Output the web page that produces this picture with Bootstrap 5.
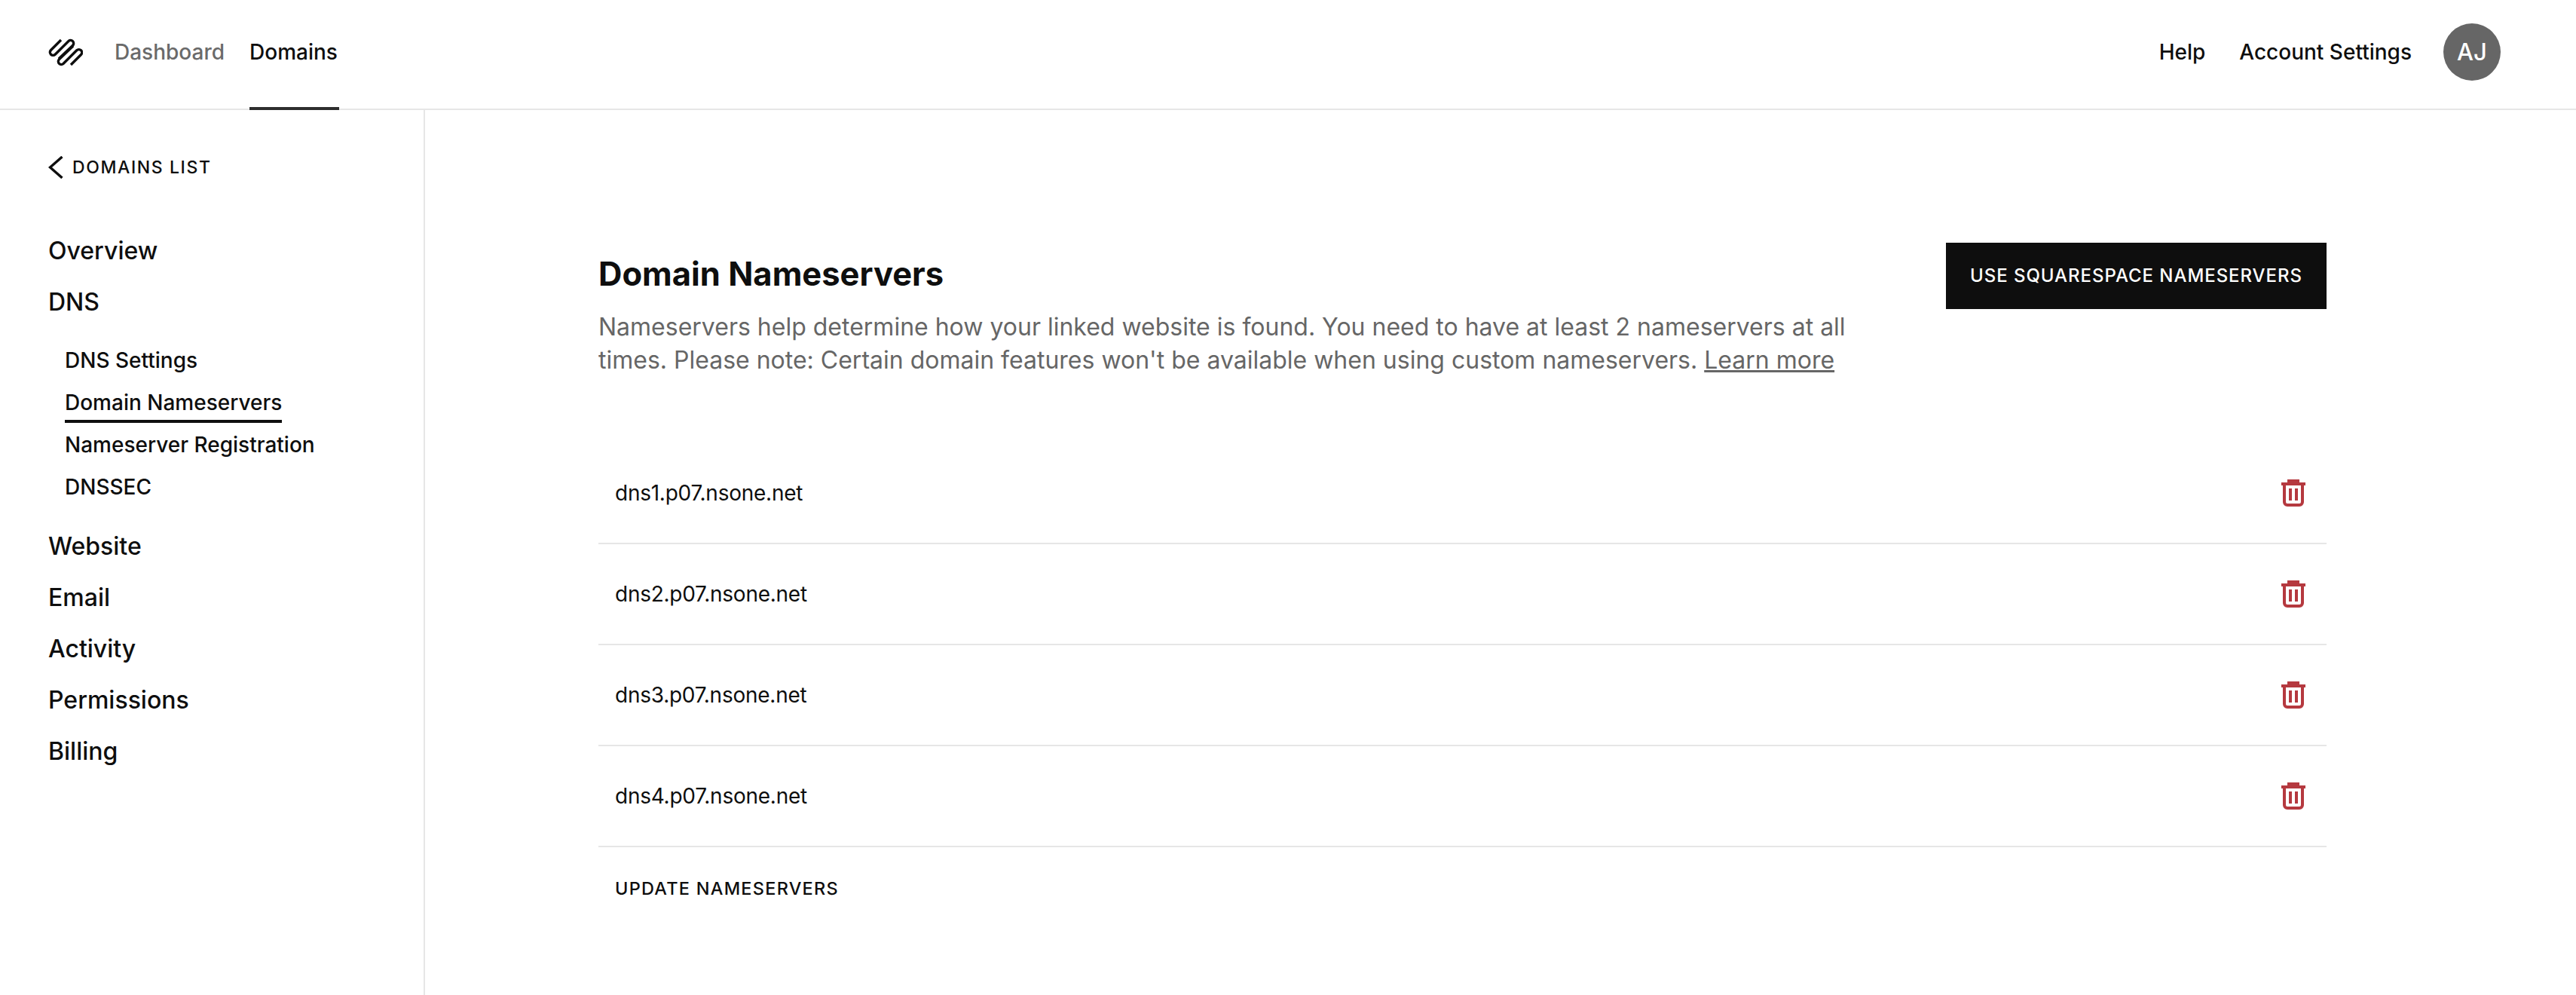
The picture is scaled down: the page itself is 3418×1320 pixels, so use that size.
<!DOCTYPE html>
<html lang="en">
<head>
<meta charset="utf-8">
<title>Domain Nameservers</title>
<link rel="stylesheet" href="https://cdn.jsdelivr.net/npm/bootstrap@5.3.0/dist/css/bootstrap.min.css">
<style>
body{font-family:Inter,"Liberation Sans",sans-serif;color:#0e0e0e;background:#fff;height:1320px;overflow:hidden}
.top-bar{height:146px;border-bottom:2px solid #e6e6e6;padding:0 100px 6px 64px}
.top-link{font-size:28px;font-weight:500;color:#0e0e0e;text-decoration:none}
.top-link.muted{color:#6a6a6a;margin-right:33px}
.tab-cur{height:146px;border-bottom:4px solid #2e2e2e;margin-bottom:-8px;padding-bottom:4px;align-self:flex-start;padding-right:2px}
.logo-mark{width:46px;height:37px;margin-right:42px}
.right-gap-a{margin-left:45px}
.right-gap-b{margin-left:42px}
.avatar-dot{width:76px;height:76px;background:#666;color:#fff;font-size:31px;font-weight:500}
.side-pane{width:564px;height:1174px;border-right:2px solid #e6e6e6;padding:59px 0 0 64px}
.back-link{font-size:23px;font-weight:500;letter-spacing:1.6px;color:#0e0e0e;text-decoration:none;margin-bottom:59px;gap:12px}
.nav-main{font-size:32px;font-weight:500;color:#0e0e0e;text-decoration:none;height:68px;line-height:68px;display:block}
.nav-sub-wrap{padding:15px 0 17px 22px}
.nav-sub{font-size:28px;font-weight:500;color:#0e0e0e;text-decoration:none;height:56px;line-height:56px;display:block}
.nav-sub span{display:inline-block;line-height:1.3}
.nav-sub.cur span{border-bottom:4px solid #0e0e0e;padding-bottom:5px;margin-bottom:-9px}
.main-pane{padding:176px 331px 0 230px}
.page-title{font-size:43.5px;font-weight:700;line-height:60px;margin:11px 0 19px}
.page-desc{font-size:32px;line-height:44px;color:#666;margin:0;width:1660px}
.page-desc a{color:#666}
.sq-btn{background:#0e0e0e;color:#fff;font-size:24px;font-weight:500;letter-spacing:.95px;width:505px;height:88px;border-radius:0;border:0;padding:0}
.sq-btn:hover{background:#0e0e0e;color:#fff}
.server-list{margin-top:88px;--bs-list-group-border-color:#e6e6e6;--bs-list-group-border-radius:0}
.server-row{height:134px;padding:0 22px;font-size:28px;letter-spacing:-.25px;border-width:0 0 2px;color:#0e0e0e}
.trash-ic{width:32px;height:36px;margin-right:6px}
.update-link{font-size:23.5px;font-weight:500;letter-spacing:1.25px;color:#0e0e0e;text-decoration:none;padding:39px 22px;display:block;line-height:32px}
</style>
</head>
<body>
<header class="top-bar d-flex align-items-stretch justify-content-between">
  <nav class="d-flex align-items-center">
    <svg class="logo-mark" viewBox="-1 -1 46 37" fill="none" stroke="#0e0e0e" stroke-width="3.4" aria-label="Squarespace">
      <path d="M16 1 2.500 14.500A4 4 0 0 0 8.200 20.200L26 2.500A4 4 0 0 1 31.600 8.200L13 26"/>
      <path d="M29 34 42.500 20.500A4 4 0 0 0 36.800 14.800L19 32.500A4 4 0 0 1 13.400 26.800L32 9"/>
    </svg>
    <a class="top-link muted" href="#">Dashboard</a>
    <a class="top-link tab-cur d-flex align-items-center" href="#">Domains</a>
  </nav>
  <div class="d-flex align-items-center">
    <a class="top-link" href="#">Help</a>
    <a class="top-link right-gap-a" href="#">Account Settings</a>
    <div class="avatar-dot rounded-circle d-flex align-items-center justify-content-center right-gap-b">AJ</div>
  </div>
</header>
<div class="d-flex">
  <aside class="side-pane flex-shrink-0">
    <a class="back-link d-flex align-items-center" href="#">
      <svg width="20" height="30" viewBox="0 0 20 30" fill="none" stroke="#0e0e0e" stroke-width="3.4"><path d="M18.500 1 2.500 15l16 14"/></svg>
      <span>DOMAINS LIST</span>
    </a>
    <a class="nav-main" href="#">Overview</a>
    <a class="nav-main" href="#">DNS</a>
    <div class="nav-sub-wrap">
      <a class="nav-sub" href="#"><span>DNS Settings</span></a>
      <a class="nav-sub cur" href="#"><span>Domain Nameservers</span></a>
      <a class="nav-sub" href="#"><span>Nameserver Registration</span></a>
      <a class="nav-sub" href="#"><span>DNSSEC</span></a>
    </div>
    <a class="nav-main" href="#">Website</a>
    <a class="nav-main" href="#">Email</a>
    <a class="nav-main" href="#">Activity</a>
    <a class="nav-main" href="#">Permissions</a>
    <a class="nav-main" href="#">Billing</a>
  </aside>
  <main class="main-pane flex-grow-1">
    <div class="d-flex justify-content-between align-items-start">
      <div>
        <h1 class="page-title">Domain Nameservers</h1>
        <p class="page-desc">Nameservers help determine how your linked website is found. You need to have at least 2 nameservers at all times. Please note: Certain domain features won't be available when using custom nameservers. <a href="#">Learn more</a></p>
      </div>
      <button class="btn sq-btn flex-shrink-0" type="button">USE SQUARESPACE NAMESERVERS</button>
    </div>
    <ul class="list-group server-list">
      <li class="list-group-item server-row d-flex align-items-center justify-content-between">dns1.p07.nsone.net<svg class="trash-ic" viewBox="0 0 32 36" fill="none" stroke="#b5393f" stroke-width="4"><path d="M10 0h12v4H10zM0 6h32M4 6v24a4 4 0 0 0 4 4h16a4 4 0 0 0 4-4V6M12 12v16M20 12v16"/></svg></li>
      <li class="list-group-item server-row d-flex align-items-center justify-content-between">dns2.p07.nsone.net<svg class="trash-ic" viewBox="0 0 32 36" fill="none" stroke="#b5393f" stroke-width="4"><path d="M10 0h12v4H10zM0 6h32M4 6v24a4 4 0 0 0 4 4h16a4 4 0 0 0 4-4V6M12 12v16M20 12v16"/></svg></li>
      <li class="list-group-item server-row d-flex align-items-center justify-content-between">dns3.p07.nsone.net<svg class="trash-ic" viewBox="0 0 32 36" fill="none" stroke="#b5393f" stroke-width="4"><path d="M10 0h12v4H10zM0 6h32M4 6v24a4 4 0 0 0 4 4h16a4 4 0 0 0 4-4V6M12 12v16M20 12v16"/></svg></li>
      <li class="list-group-item server-row d-flex align-items-center justify-content-between">dns4.p07.nsone.net<svg class="trash-ic" viewBox="0 0 32 36" fill="none" stroke="#b5393f" stroke-width="4"><path d="M10 0h12v4H10zM0 6h32M4 6v24a4 4 0 0 0 4 4h16a4 4 0 0 0 4-4V6M12 12v16M20 12v16"/></svg></li>
    </ul>
    <a class="update-link" href="#">UPDATE NAMESERVERS</a>
  </main>
</div>
</body>
</html>
